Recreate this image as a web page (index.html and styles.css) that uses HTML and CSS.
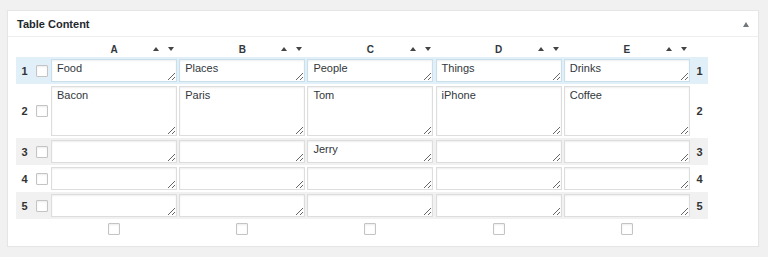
FILE: index.html
```html
<!DOCTYPE html>
<html lang="en">
<head>
    <meta charset="UTF-8">
    <meta name="viewport" content="width=device-width, initial-scale=1.0">
    <title>Table Content</title>
    <link rel="stylesheet" href="styles.css">
</head>
<body>
    <div class="postbox">
        <div class="postbox-header">
            <h2>Table Content</h2>
            <span class="toggle-indicator"></span>
        </div>

        <div class="inside">
            <table class="tp-table">
                <thead>
                    <tr>
                        <th class="row-num"></th>
                        <th class="row-check"></th>
                        <th class="col-head"><div class="col-head-inner"><span></span><span class="col-letter">A</span><span class="sort"><i class="up"></i><i class="down"></i></span></div></th>
                        <th class="col-head"><div class="col-head-inner"><span></span><span class="col-letter">B</span><span class="sort"><i class="up"></i><i class="down"></i></span></div></th>
                        <th class="col-head"><div class="col-head-inner"><span></span><span class="col-letter">C</span><span class="sort"><i class="up"></i><i class="down"></i></span></div></th>
                        <th class="col-head"><div class="col-head-inner"><span></span><span class="col-letter">D</span><span class="sort"><i class="up"></i><i class="down"></i></span></div></th>
                        <th class="col-head"><div class="col-head-inner"><span></span><span class="col-letter">E</span><span class="sort"><i class="up"></i><i class="down"></i></span></div></th>
                        <th class="row-num"></th>
                    </tr>
                </thead>
                <tbody>
                    <tr class="row-highlight">
                        <th class="row-num">1</th>
                        <td class="row-check"><input type="checkbox"></td>
                        <td><textarea>Food</textarea></td>
                        <td><textarea>Places</textarea></td>
                        <td><textarea>People</textarea></td>
                        <td><textarea>Things</textarea></td>
                        <td><textarea>Drinks</textarea></td>
                        <th class="row-num">1</th>
                    </tr>
                    <tr class="row-tall">
                        <th class="row-num">2</th>
                        <td class="row-check"><input type="checkbox"></td>
                        <td><textarea>Bacon</textarea></td>
                        <td><textarea>Paris</textarea></td>
                        <td><textarea>Tom</textarea></td>
                        <td><textarea>iPhone</textarea></td>
                        <td><textarea>Coffee</textarea></td>
                        <th class="row-num">2</th>
                    </tr>
                    <tr class="row-odd">
                        <th class="row-num">3</th>
                        <td class="row-check"><input type="checkbox"></td>
                        <td><textarea></textarea></td>
                        <td><textarea></textarea></td>
                        <td><textarea>Jerry</textarea></td>
                        <td><textarea></textarea></td>
                        <td><textarea></textarea></td>
                        <th class="row-num">3</th>
                    </tr>
                    <tr>
                        <th class="row-num">4</th>
                        <td class="row-check"><input type="checkbox"></td>
                        <td><textarea></textarea></td>
                        <td><textarea></textarea></td>
                        <td><textarea></textarea></td>
                        <td><textarea></textarea></td>
                        <td><textarea></textarea></td>
                        <th class="row-num">4</th>
                    </tr>
                    <tr class="row-odd">
                        <th class="row-num">5</th>
                        <td class="row-check"><input type="checkbox"></td>
                        <td><textarea></textarea></td>
                        <td><textarea></textarea></td>
                        <td><textarea></textarea></td>
                        <td><textarea></textarea></td>
                        <td><textarea></textarea></td>
                        <th class="row-num">5</th>
                    </tr>
                </tbody>
                <tfoot>
                    <tr>
                        <td></td>
                        <td></td>
                        <td><input type="checkbox"></td>
                        <td><input type="checkbox"></td>
                        <td><input type="checkbox"></td>
                        <td><input type="checkbox"></td>
                        <td><input type="checkbox"></td>
                        <td></td>
                    </tr>
                </tfoot>
            </table>
        </div>
    </div>
</body>
</html>
```

FILE: styles.css
```css
body {
    font-family: 'Liberation Sans', Arial, sans-serif;
    background: #f1f1f1;
    color: #23282d;
    margin: 0;
    padding: 10px 9px 0 7px;
}
.postbox {
    background: #fff;
    border: 1px solid #e5e5e5;
    box-shadow: 0 1px 1px rgba(0, 0, 0, 0.04);
    height: 235px;
}
.postbox-header {
    display: flex;
    justify-content: space-between;
    align-items: center;
    height: 25px;
    padding: 0 9px;
    border-bottom: 1px solid #eee;
}
.postbox-header h2 {
    margin: 0;
    padding-top: 1px;
    font-size: 11px;
    line-height: 24px;
    font-weight: bold;
    color: #23282d;
}
.toggle-indicator {
    width: 0;
    height: 0;
    border-left: 3.5px solid transparent;
    border-right: 3.5px solid transparent;
    border-bottom: 5px solid #72777c;
    margin-top: 2px;
}
.inside {
    padding: 0 8px;
}
.tp-table {
    border-collapse: separate;
    border-spacing: 0;
    width: 692px;
    table-layout: fixed;
}
.tp-table th,
.tp-table td {
    padding: 2px 1px;
    vertical-align: middle;
    text-align: center;
}
.tp-table .row-num {
    width: 17px;
    padding: 0;
    font-size: 11px;
    font-weight: bold;
    color: #333;
}
.tp-table .row-check {
    width: 17px;
    padding: 0;
}
.tp-table thead th {
    height: 20px;
    padding: 0 1px;
}
.col-head {
    width: 126px;
}
.col-head-inner {
    display: grid;
    grid-template-columns: 1fr auto 1fr;
    align-items: center;
    padding-top: 4px;
}
.col-letter {
    font-size: 10px;
    font-weight: bold;
    color: #32373c;
}
.sort {
    display: flex;
    justify-content: flex-end;
    gap: 9px;
    padding-right: 3px;
}
.sort i {
    width: 0;
    height: 0;
    border-left: 3px solid transparent;
    border-right: 3px solid transparent;
}
.sort .up {
    border-bottom: 4px solid #444;
}
.sort .down {
    border-top: 4px solid #444;
}
.tp-table textarea {
    display: block;
    box-sizing: border-box;
    width: 126px;
    height: 23px;
    margin: 0;
    padding: 0 5px;
    font-family: 'Liberation Sans', Arial, sans-serif;
    font-size: 11px;
    line-height: 16px;
    color: #32373c;
    background: #fff;
    border: 1px solid #ddd;
    box-shadow: inset 0 1px 2px rgba(0, 0, 0, 0.07);
    border-radius: 0;
    resize: vertical;
    overflow: hidden;
}
.row-tall textarea {
    height: 50px;
}
.row-highlight th,
.row-highlight td {
    background: #e0eff8;
}
.row-highlight textarea {
    border-color: #c9dfeb;
}
.row-odd th,
.row-odd td {
    background: #f1f1f1;
}
.tp-table input[type="checkbox"] {
    -webkit-appearance: none;
    appearance: none;
    display: block;
    margin: 0 auto;
    width: 12px;
    height: 12px;
    background: #fff;
    border: 1px solid #c4c4c4;
    border-radius: 1px;
    box-shadow: inset 0 1px 2px rgba(0, 0, 0, 0.08);
}
.tp-table tfoot td {
    padding-top: 4px;
}
```
